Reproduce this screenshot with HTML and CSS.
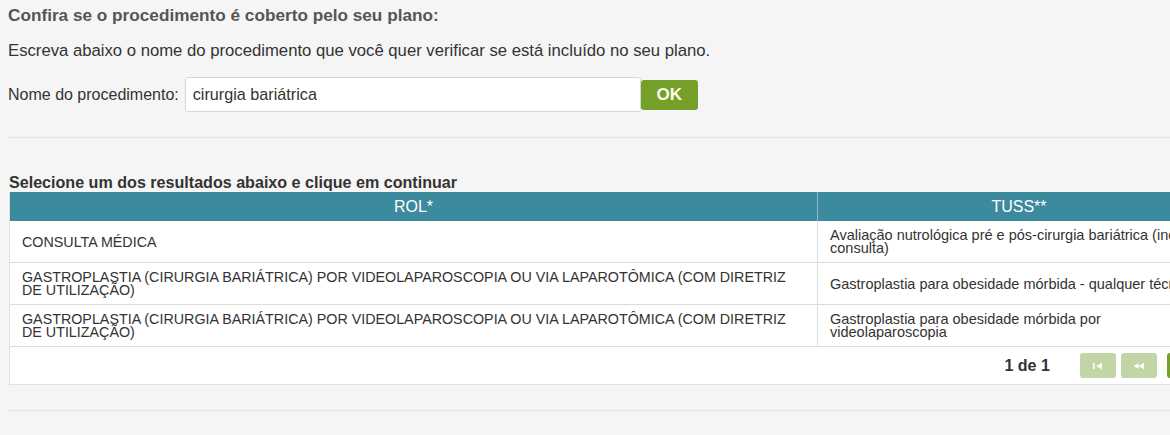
FILE: index.html
```html
<!DOCTYPE html>
<html lang="pt-BR">
<head>
<meta charset="utf-8">
<title>Confira se o procedimento é coberto</title>
<link rel="stylesheet" href="styles.css">
</head>
<body>
<div class="page">
  <h2 class="title">Confira se o procedimento é coberto pelo seu plano:</h2>
  <p class="intro">Escreva abaixo o nome do procedimento que você quer verificar se está incluído no seu plano.</p>
  <form class="search">
    <label class="search-label" for="proc">Nome do procedimento:</label>
    <input class="search-input" id="proc" type="text" value="cirurgia bariátrica">
    <button class="ok-btn" type="button">OK</button>
  </form>
  <hr class="sep">
  <h3 class="results-title">Selecione um dos resultados abaixo e clique em continuar</h3>
  <div class="grid">
    <table class="results">
      <thead>
        <tr><th class="col-rol">ROL*</th><th class="col-tuss">TUSS**</th></tr>
      </thead>
      <tbody>
        <tr><td>CONSULTA MÉDICA</td><td>Avaliação nutrológica pré e pós-cirurgia bariátrica (inclui consulta)</td></tr>
        <tr><td>GASTROPLASTIA (CIRURGIA BARIÁTRICA) POR VIDEOLAPAROSCOPIA OU VIA LAPAROTÔMICA (COM DIRETRIZ DE UTILIZAÇÃO)</td><td>Gastroplastia para obesidade mórbida - qualquer técnica</td></tr>
        <tr><td>GASTROPLASTIA (CIRURGIA BARIÁTRICA) POR VIDEOLAPAROSCOPIA OU VIA LAPAROTÔMICA (COM DIRETRIZ DE UTILIZAÇÃO)</td><td>Gastroplastia para obesidade mórbida por videolaparoscopia</td></tr>
      </tbody>
      <tfoot>
        <tr>
          <td class="foot-empty"></td>
          <td class="foot-pager">
            <div class="pager">
              <span class="pager-count">1 de 1</span>
              <span class="pg-btn disabled">
                <svg width="14" height="8" viewBox="0 0 14 8"><rect x="2" y="1" width="1.6" height="6" fill="#fff"/><path d="M5 4 L11 0.8 V7.2 Z" fill="#fff"/></svg>
              </span>
              <span class="pg-btn disabled">
                <svg width="14" height="8" viewBox="0 0 14 8"><path d="M1.5 4 L6.5 1.2 V6.8 Z" fill="#fff"/><path d="M6.5 4 L12 0.8 V7.2 Z" fill="#fff"/></svg>
              </span>
              <span class="pg-btn next">
                <svg width="14" height="8" viewBox="0 0 14 8"><path d="M2 0.8 L7.5 4 L2 7.2 Z" fill="#fff"/><path d="M7.5 1.2 L12.5 4 L7.5 6.8 Z" fill="#fff"/></svg>
              </span>
              <span class="pg-btn next">
                <svg width="14" height="8" viewBox="0 0 14 8"><path d="M3 0.8 L9 4 L3 7.2 Z" fill="#fff"/><rect x="10.4" y="1" width="1.6" height="6" fill="#fff"/></svg>
              </span>
            </div>
          </td>
        </tr>
      </tfoot>
    </table>
  </div>
  <hr class="sep sep-bottom">
</div>
</body>
</html>
```

FILE: styles.css
```css
html, body {
  margin: 0;
  padding: 0;
  background: #f5f5f5;
  overflow: hidden;
}

body {
  font-family: "Liberation Sans", Arial, sans-serif;
  color: #333;
}

.page {
  padding: 5px 0 0 8px;
  width: 1400px;
}

.title {
  margin: 0;
  font-size: 17.2px;
  font-weight: bold;
  color: #555;
  line-height: 20px;
}

.intro {
  margin: 16px 0 0;
  font-size: 16.7px;
  line-height: 20px;
  color: #333;
}

.search {
  display: flex;
  align-items: center;
  margin-top: 16px;
}

.search-label {
  font-size: 16px;
  color: #333;
  margin-right: 6px;
}

.search-input {
  box-sizing: border-box;
  width: 456px;
  height: 35px;
  border: 1px solid #d6d6d6;
  border-radius: 3px;
  background: #fff;
  padding: 0 7px;
  font-family: "Liberation Sans", Arial, sans-serif;
  font-size: 16.2px;
  color: #333;
}

.ok-btn {
  box-sizing: border-box;
  width: 57px;
  height: 30px;
  margin-left: 0;
  border: none;
  border-radius: 3px;
  background: #74a02a;
  color: #fbfbe8;
  font-family: "Liberation Sans", Arial, sans-serif;
  font-size: 17px;
  font-weight: bold;
  padding: 0;
}

.sep {
  border: none;
  border-top: 1px solid #e4e4e4;
  margin: 25px 0 0;
  width: 1162px;
}

.results-title {
  margin: 34px 0 0 1px;
  font-size: 16.1px;
  font-weight: bold;
  line-height: 20px;
  color: #333;
}

.grid {
  margin-left: 1px;
  width: 1210px;
  background: #fff;
  border: 1px solid #e2e2e2;
  border-top: none;
}

.results {
  border-collapse: collapse;
  width: 100%;
  table-layout: fixed;
}

.results th {
  background: #3c8a9d;
  color: #fff;
  font-weight: normal;
  font-size: 16px;
  height: 29px;
  padding: 0;
  text-align: center;
  border-left: 1px solid #8ab8c4;
}

.results th:first-child {
  border-left: none;
}

.col-rol {
  width: 807px;
}

.results tbody td {
  font-size: 14.3px;
  line-height: 13px;
  color: #333;
  padding: 7px 16px 6px 12px;
  height: 28px;
  border-top: 1px solid #dcdcdc;
  border-left: 1px solid #dcdcdc;
  vertical-align: middle;
}

.results tbody td + td {
  font-size: 14.5px;
  padding-right: 13px;
}

.results tbody td:first-child {
  border-left: none;
}

.results tbody tr:first-child td {
  border-top: none;
}

.results tfoot td {
  padding: 0;
  border-top: 1px solid #dcdcdc;
  height: 37px;
}

.pager {
  display: flex;
  align-items: center;
  gap: 5px;
  padding-left: 187px;
  white-space: nowrap;
}

.pager-count {
  font-size: 16px;
  font-weight: bold;
  color: #333;
  margin-right: 25px;
}

.pg-btn {
  display: flex;
  align-items: center;
  justify-content: center;
  flex: none;
  width: 36px;
  height: 25px;
  border-radius: 3px;
  background: #74a02a;
}

.pg-btn.disabled {
  background: #c2d5a6;
}

.pg-btn.disabled + .pg-btn.next {
  margin-left: 5px;
}

.sep-bottom {
  margin-top: 25px;
}
```
